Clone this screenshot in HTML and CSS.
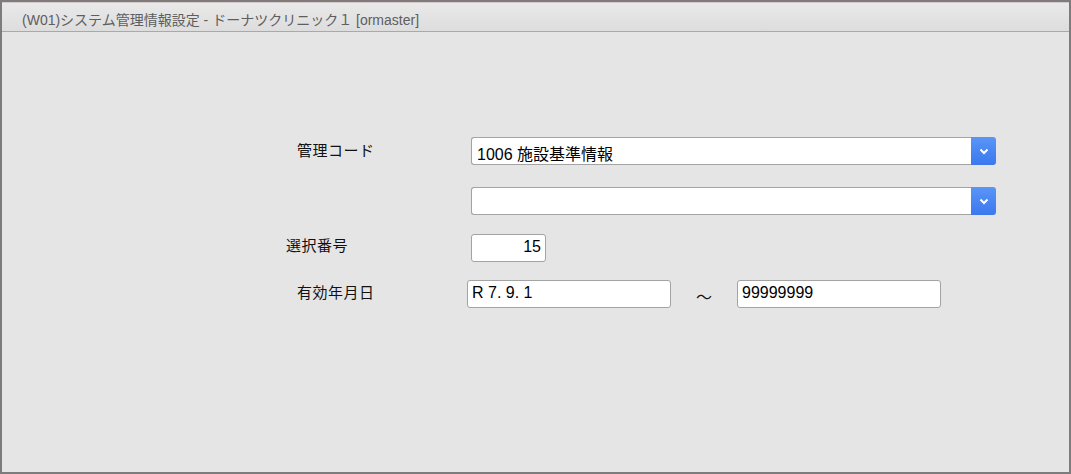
FILE: index.html
```html
<!DOCTYPE html>
<html lang="ja">

<head>
    <meta charset="UTF-8">
    <meta name="viewport" content="width=device-width, initial-scale=1.0">
    <title>システム管理情報設定</title>
    <link rel="stylesheet" href="styles.css">
</head>

<body>

    <div class="window">
        <div class="titlebar">(W01)システム管理情報設定 - ドーナツクリニック１ [ormaster]</div>

        <div class="form">
            <!-- 管理コード -->
            <div class="row row-code">
                <div class="label label-indent label-code">管理コード</div>
                <div class="select">
                    <div class="select-text">1006 施設基準情報</div>
                    <div class="select-btn">
                        <svg width="10" height="7" viewBox="0 0 10 7"><path d="M1.5 1.5 L5 5 L8.5 1.5" fill="none" stroke="#fff" stroke-width="2"/></svg>
                    </div>
                </div>
            </div>

            <div class="row row-sub">
                <div class="label"></div>
                <div class="select">
                    <div class="select-text"></div>
                    <div class="select-btn">
                        <svg width="10" height="7" viewBox="0 0 10 7"><path d="M1.5 1.5 L5 5 L8.5 1.5" fill="none" stroke="#fff" stroke-width="2"/></svg>
                    </div>
                </div>
            </div>

            <!-- 選択番号 -->
            <div class="row row-num">
                <div class="label">選択番号</div>
                <div class="input input-num">15</div>
            </div>

            <!-- 有効年月日 -->
            <div class="row row-date">
                <div class="label label-indent label-date">有効年月日</div>
                <div class="input input-date">R 7. 9. 1</div>
                <div class="tilde">～</div>
                <div class="input input-date">99999999</div>
            </div>
        </div>
    </div>

</body>

</html>
```

FILE: styles.css
```css
body {
    margin: 0;
    font-family: "Liberation Sans", Arial, "Noto Sans CJK JP", sans-serif;
    background-color: #e5e5e5;
}

.window {
    width: 1071px;
    height: 474px;
    box-sizing: border-box;
    border: 2px solid #7c7c7c;
    background-color: #e5e5e5;
}

.titlebar {
    height: 30px;
    box-sizing: border-box;
    padding: 6px 0 0 20px;
    font-size: 14px;
    color: #5e5e5e;
    background: linear-gradient(#e9e9e9, #dddddd);
    border-bottom: 1px solid #a9a9a9;
    border-top: 1px solid #d7c9c9;
}

.form {
    padding-top: 105px;
    padding-left: 284px;
}

.row {
    display: flex;
    align-items: center;
}

.row-sub {
    margin-top: 22px;
}

.row-num {
    margin-top: 19px;
    align-items: flex-start;
}

.row-date {
    margin-top: 17px;
}

.label {
    width: 185px;
    box-sizing: border-box;
    font-size: 15px;
    letter-spacing: 0.5px;
    color: #111;
}

.label-indent {
    padding-left: 11px;
}

.label-code {
    padding-bottom: 3px;
}

.label-date {
    width: 181px;
    padding-bottom: 4px;
}

.select {
    display: flex;
    width: 525px;
    height: 28px;
}

.select-text {
    flex: 1;
    box-sizing: border-box;
    height: 28px;
    background-color: #fff;
    border: 1px solid #a3a3a3;
    border-right: none;
    border-radius: 3px 0 0 3px;
    padding: 3px 0 0 5px;
    font-size: 16px;
    color: #000;
}

.select-btn {
    width: 25px;
    height: 28px;
    background: linear-gradient(#5a95f7, #3a78ee);
    border-radius: 0 3px 3px 0;
    display: flex;
    align-items: center;
    justify-content: center;
}

.input {
    box-sizing: border-box;
    height: 28px;
    background-color: #fff;
    border: 1px solid #a3a3a3;
    border-radius: 3px;
    font-size: 16px;
    color: #000;
    padding-top: 3px;
}

.input-num {
    width: 75px;
    text-align: right;
    padding-right: 4px;
}

.input-date {
    width: 204px;
    padding-left: 4px;
}

.tilde {
    width: 66px;
    text-align: center;
    font-size: 16px;
    padding-top: 5px;
    color: #111;
}
```
